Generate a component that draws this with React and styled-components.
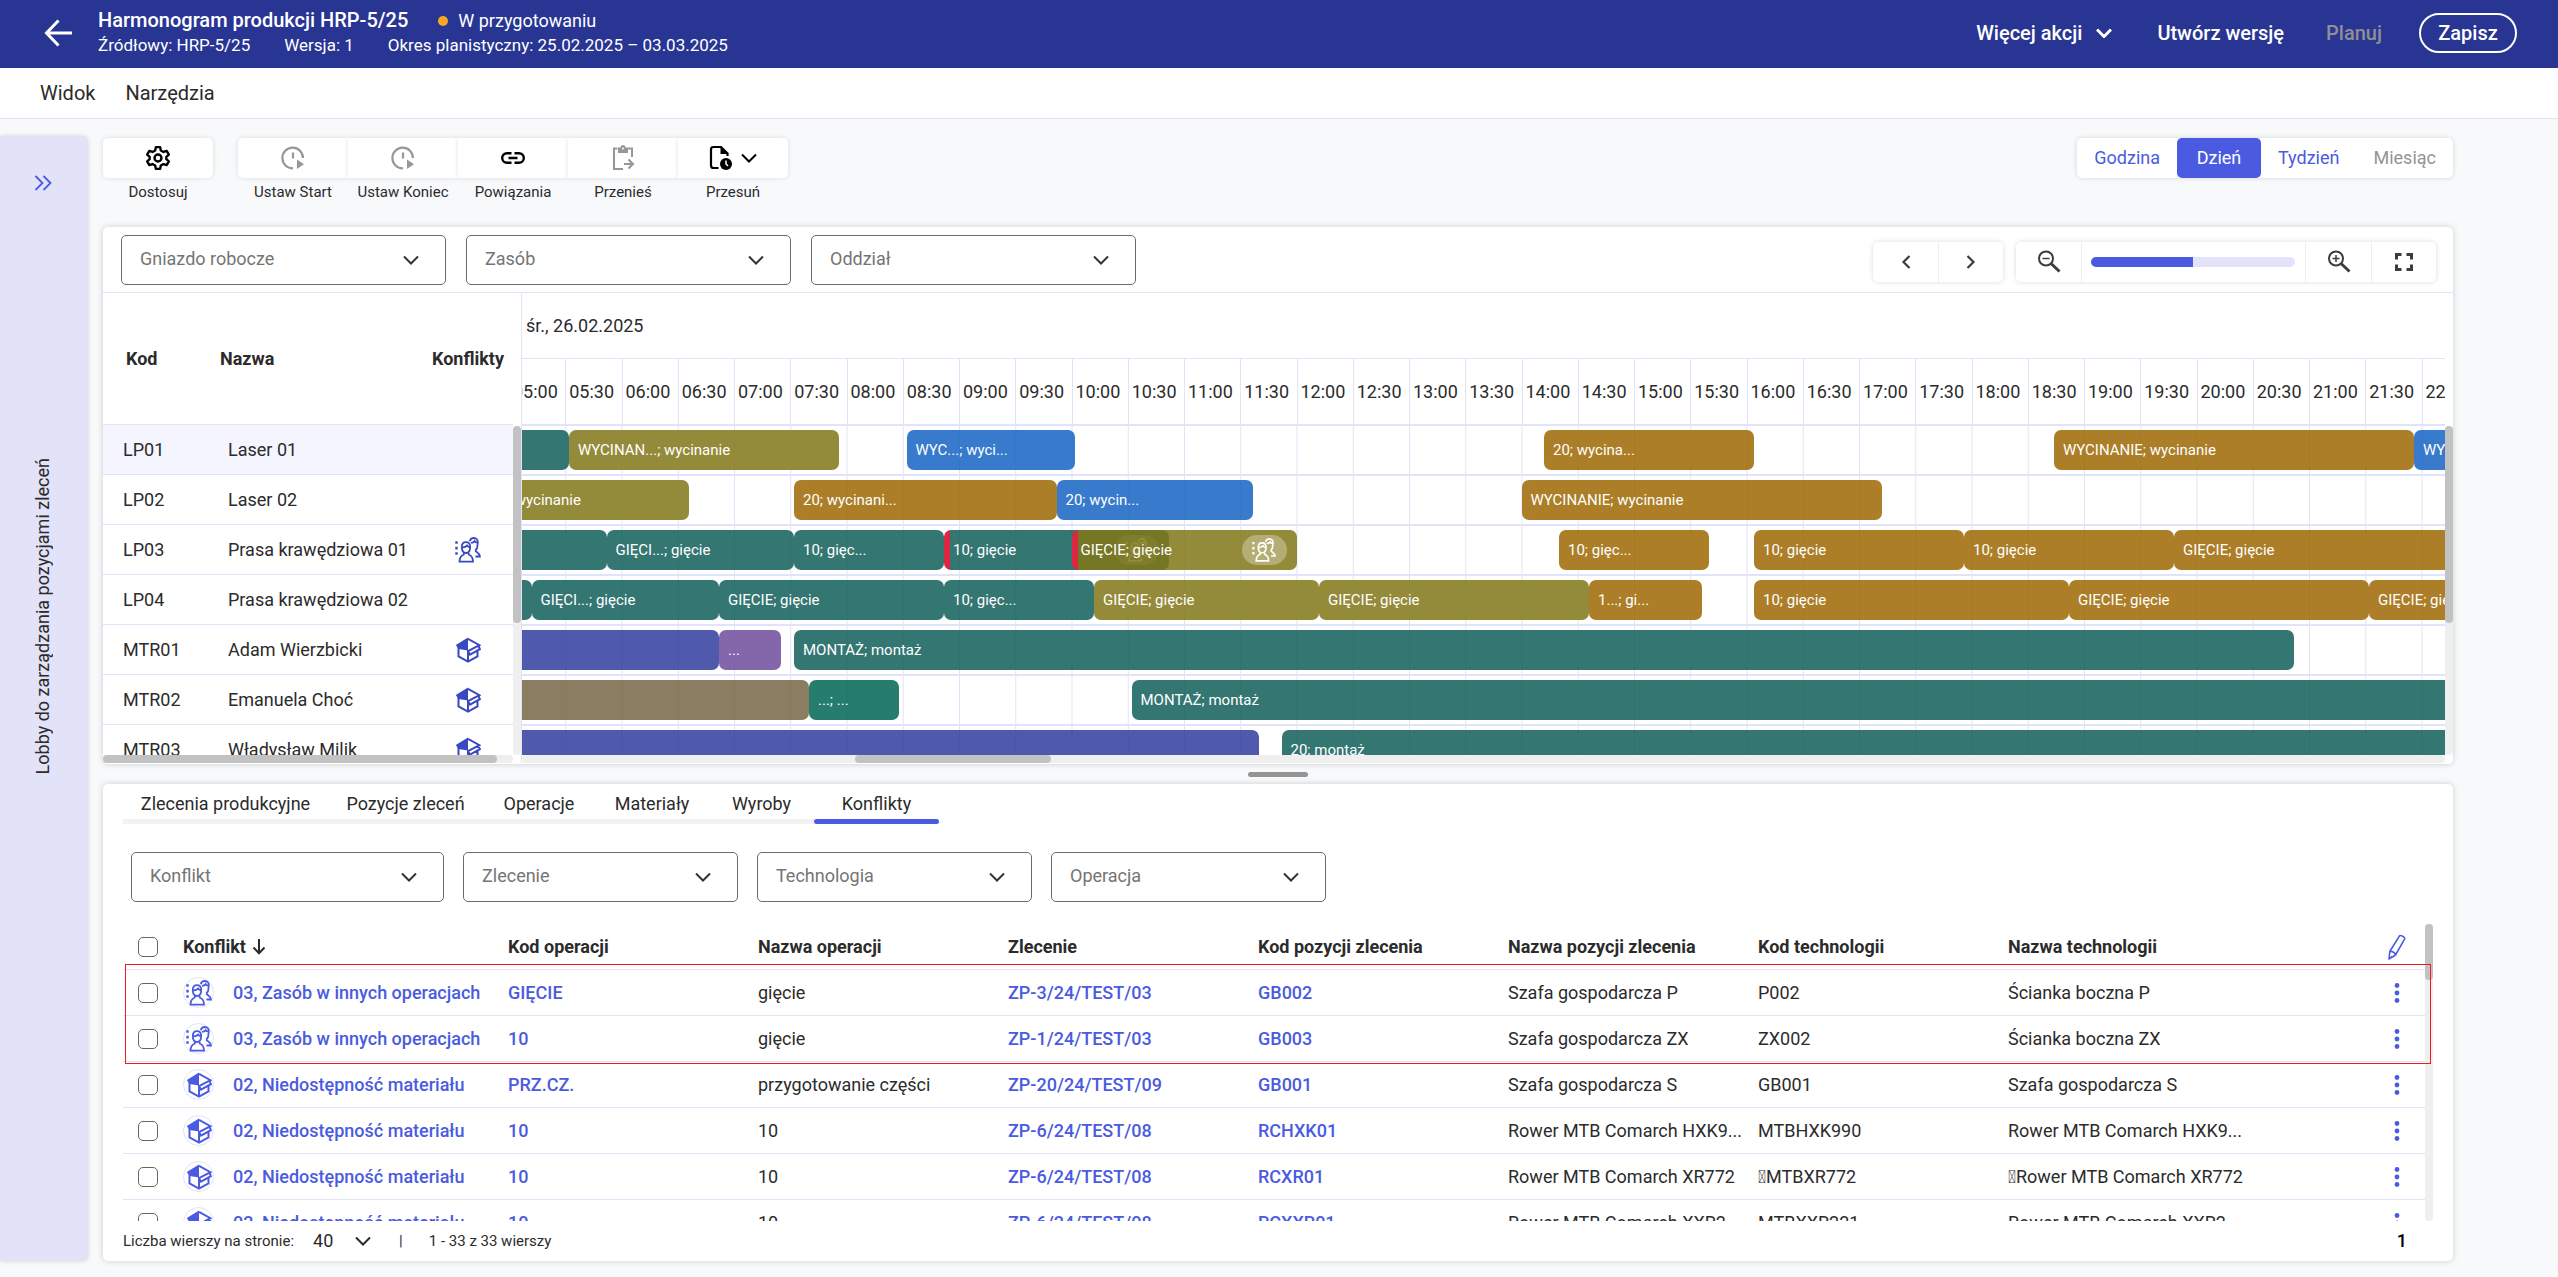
import styled, { createGlobalStyle } from "styled-components";

const colors = {
  navy: "#283593",
  accent: "#4a5be1",
  lilac: "#e2e3f8",
  page: "#f8f9fb",
  text: "#2b2b2b",
  muted: "#757575",
  disabled: "#949494",
};

const barColors = {
  teal: "rgba(16, 94, 89, 0.85)",
  olive: "rgba(129, 119, 23, 0.85)",
  gold: "rgba(156, 103, 1, 0.85)",
  blue: "rgba(21, 99, 194, 0.85)",
  indigo: "rgba(48, 61, 157, 0.85)",
  purple: "rgba(110, 76, 155, 0.85)",
  brown: "rgba(117, 102, 69, 0.85)",
  green: "rgba(0, 102, 84, 0.85)",
};

const GlobalStyle = createGlobalStyle`
  * {
    box-sizing: border-box;
  }
  body {
    margin: 0;
    background: ${colors.page};
    color: ${colors.text};
    font-family: Roboto, "Liberation Sans", sans-serif;
    font-size: 18px;
    line-height: 24px;
  }
  button, select, input {
    font: inherit;
    color: inherit;
    margin: 0;
  }
  button {
    border: 0;
    padding: 0;
    background: none;
    cursor: pointer;
  }
  a {
    color: ${colors.accent};
    font-weight: 500;
    text-decoration: none;
  }
`;

const Page = styled.div`
  display: flex;
  flex-direction: column;
  height: 100vh;
  min-height: 1100px;
`;

/* top bar */

const TopBar = styled.header`
  display: flex;
  align-items: center;
  height: 68px;
  padding: 0 41px 2px 44px;
  background: ${colors.navy};
  color: white;
`;

const BackButton = styled.button`
  display: flex;
  width: 54px;
`;

const Heading = styled.div`
  flex: 1;
`;

const HeadingLine = styled.div`
  display: flex;
  align-items: center;
  gap: 30px;
  line-height: 25px;
`;

const Title = styled.h1`
  margin: 0;
  font-size: 20px;
  font-weight: 500;
  line-height: 25px;
`;

const Details1 = styled(HeadingLine)`
  gap: 34px;
  font-size: 17px;
`;

const Status = styled.span`
  display: flex;
  align-items: center;
  gap: 10px;

  &::before {
    content: "";
    width: 10px;
    height: 10px;
    border-radius: 50%;
    background: #f9a825;
  }
`;

const TopActions = styled.div`
  display: flex;
  align-items: center;
  font-size: 20px;
  font-weight: 500;
`;

const TopAction = styled.button`
  display: flex;
  align-items: center;
  gap: 14px;
  margin-right: ${(p) => p.$space}px;

  &:disabled {
    color: #8f8f94;
  }
`;

const SaveButton = styled.button`
  height: 40px;
  width: 98px;
  border: 2px solid white;
  border-radius: 20px;
`;

const MenuBar = styled.nav`
  display: flex;
  gap: 30px;
  height: 51px;
  padding: 0 40px;
  background: white;
  border-bottom: 1px solid ${colors.lilac};
  font-size: 20px;
`;

/* page body */

const Body = styled.div`
  flex: 1;
  display: flex;
  min-height: 0;
`;

const Lobby = styled.aside`
  display: flex;
  flex-direction: column;
  align-items: center;
  width: 88px;
  margin: 17px 15px 16px 0;
  padding: 32px 2px 0 0;
  background: ${colors.lilac};
  border-radius: 0 5px 5px 0;
  box-shadow: 0 0 5px rgba(0, 0, 0, 0.15);
`;

const LobbyLabel = styled.span`
  margin-top: 260px;
  writing-mode: vertical-rl;
  transform: rotate(180deg);
`;

const Main = styled.main`
  flex: 1;
  display: flex;
  flex-direction: column;
  min-width: 0;
  padding: 19px 105px 16px 0;
`;

const Toolbar = styled.div`
  display: flex;
  align-items: flex-start;
  gap: 25px;
  height: 89px;
`;

const ToolGroup = styled.div`
  display: flex;
`;

const Tool = styled.button`
  width: 110px;
  font-size: 15px;
  line-height: 18px;
`;

const ToolFace = styled.span`
  display: flex;
  align-items: center;
  justify-content: center;
  gap: 8px;
  height: 40px;
  margin-bottom: 5px;
  background: white;
  box-shadow: 0 0 5px rgba(0, 0, 0, 0.12);
  color: ${(p) => (p.$dim ? "#979797" : "black")};

  ${Tool}:first-child & {
    border-radius: 5px 0 0 5px;
  }
  ${Tool}:last-child & {
    border-radius: 0 5px 5px 0;
  }
  ${Tool}:only-child & {
    border-radius: 5px;
  }
`;

const ScaleSwitch = styled.div`
  display: flex;
  height: 40px;
  margin-left: auto;
  border-radius: 5px;
  background: white;
  box-shadow: 0 0 5px rgba(0, 0, 0, 0.15);
`;

const ScaleButton = styled.button`
  min-width: 84px;
  padding: 0 17px;
  border-radius: 5px;
  color: ${(p) => (p.$active ? "white" : colors.accent)};
  background: ${(p) => (p.$active ? colors.accent : "none")};

  &:disabled {
    color: ${colors.disabled};
  }
`;

const Card = styled.section`
  background: white;
  border-radius: 5px;
  box-shadow: 0 0 6px rgba(0, 0, 0, 0.18);
`;

/* drop-downs */

const SelectBox = styled.div`
  display: grid;
  align-items: center;
  width: ${(p) => p.$width}px;

  select,
  svg {
    grid-area: 1 / 1;
  }
  svg {
    justify-self: end;
    margin-right: 27px;
    color: #333;
    pointer-events: none;
  }
`;

const Select = styled.select`
  width: 100%;
  height: 50px;
  padding: 0 18px 2px;
  border: 1px solid #6b6b6b;
  border-radius: 5px;
  background: white;
  color: ${colors.muted};
  appearance: none;
`;

/* gantt */

const GanttTop = styled.div`
  display: flex;
  align-items: center;
  gap: 20px;
  height: 66px;
  padding: 0 17px 0 18px;
  border-bottom: 1px solid ${colors.lilac};
`;

const Controls = styled.div`
  display: flex;
  gap: 13px;
  margin: 4px 0 0 auto;
`;

const ControlGroup = styled.div`
  display: flex;
  height: 40px;
  border-radius: 5px;
  color: #3d3d3d;
  box-shadow: 0 0 5px rgba(0, 0, 0, 0.15);
`;

const ControlButton = styled.button`
  display: flex;
  align-items: center;
  justify-content: center;
  width: 65px;

  & + & {
    border-left: 1px solid #efefef;
  }
`;

const ZoomSlot = styled.div`
  display: flex;
  align-items: center;
  width: 225px;
  padding: 0 10px 0 9px;
  border-left: 1px solid #efefef;
  border-right: 1px solid #efefef;
`;

const ZoomRange = styled.input`
  width: 100%;
  height: 10px;
  border-radius: 5px;
  background: linear-gradient(90deg, ${colors.accent} 50%, ${colors.lilac} 50%);
  appearance: none;

  &::-webkit-slider-thumb {
    appearance: none;
    width: 1px;
    height: 10px;
  }
`;

const Gantt = styled.div`
  display: grid;
  grid-template-columns: 410px 8px minmax(0, 1fr) 8px;
  grid-template-rows: 133px 329px 8px;
  padding-bottom: 1px;
`;

const ResourcePane = styled.div`
  grid-area: 1 / 1 / 3 / 2;
  overflow: hidden;
`;

const ResourceTable = styled.table`
  width: 100%;
  table-layout: fixed;
  border-collapse: separate;
  border-spacing: 0;

  th,
  td {
    padding: 0 0 0 20px;
    border-bottom: 1px solid ${colors.lilac};
    text-align: left;
    white-space: nowrap;
  }
  th {
    height: 132px;
    padding-left: 12px;
    font-weight: 700;
  }
  th:first-child {
    padding-left: 23px;
  }
  td {
    height: 50px;
  }
  th:last-child,
  td:last-child {
    padding: 0 2px 0 0;
    text-align: center;
  }
  td svg {
    display: block;
    margin: 0 auto;
    color: #3949bf;
  }
`;

const ResourceRow = styled.tr`
  background: ${(p) => (p.$active ? "#f5f5ff" : "white")};
`;

const TimePane = styled.div`
  grid-area: 1 / 3 / 4 / 4;
  display: grid;
  grid-template-rows: 462px 8px;
  border-left: 1px solid ${colors.lilac};
`;

const TimeScroll = styled.div`
  overflow: hidden;
`;

const Day = styled.div`
  height: 66px;
  padding: 21px 4px;
  border-bottom: 1px solid ${colors.lilac};
`;

/* twenty hours, shown from a little past 05:00 */
const Canvas = styled.div`
  width: 2250px;
  margin-left: -238px;
`;

const Hours = styled.div`
  display: grid;
  grid-template-columns: repeat(40, minmax(0, 1fr));
  height: 67px;
  border-bottom: 2px solid ${colors.lilac};
`;

const Hour = styled.div`
  padding: 21px 0 0 3px;
  border-left: 1px solid ${colors.lilac};
`;

const Lane = styled.div`
  display: grid;
  grid-template-columns: repeat(1200, minmax(0, 1fr));
  grid-template-rows: 40px;
  align-content: center;
  height: 50px;
  border-bottom: 2px solid ${colors.lilac};
  background: linear-gradient(90deg, ${colors.lilac} 1px, white 1px);
  background-size: calc(100% / 40) 100%;
`;

const Bar = styled.div`
  grid-row: 1;
  display: flex;
  align-items: center;
  justify-content: space-between;
  padding: 0 10px 0 9px;
  overflow: hidden;
  border-radius: 7px;
  color: white;
  font-size: 15px;
  white-space: nowrap;
  background: ${(p) =>
    p.$conflict
      ? `linear-gradient(90deg, #dc2540 6px, ${barColors[p.$color]} 6px)`
      : barColors[p.$color]};
`;

const BarBadge = styled.span`
  display: flex;
  align-items: center;
  justify-content: center;
  width: 45px;
  height: 30px;
  border-radius: 15px;
  background: rgba(255, 255, 255, 0.3);
`;

const Scroll = styled.div`
  grid-area: ${(p) => p.$area};
  display: flex;
  flex-direction: ${(p) => (p.$vertical ? "column" : "row")};
  border-radius: 4px;
  background: #efefef;

  &::before {
    content: "";
    flex: 0 0 ${(p) => p.$start || 0}%;
  }
  &::after {
    content: "";
    flex: 0 0 ${(p) => p.$size}%;
    border-radius: 4px;
    background: #c2c2c2;
  }
`;

const Splitter = styled.div`
  display: flex;
  justify-content: center;
  height: 20px;
  padding-top: 8px;

  &::before {
    content: "";
    width: 60px;
    height: 5px;
    border-radius: 3px;
    background: #949494;
  }
`;

/* details */

const Details = styled(Card)`
  flex: 1;
  display: flex;
  flex-direction: column;
  min-height: 0;
  padding: 0 20px;
`;

const Tabs = styled.div`
  display: grid;
  grid-template-columns: 205px 155px 112px 114px 105px 125px;
  height: 40px;
`;

const Tab = styled.button`
  display: flex;
  flex-direction: column;
  justify-content: space-between;
  padding-top: 8px;

  &::after {
    content: "";
    width: 100%;
    height: 5px;
    border-radius: ${(p) => (p.$active ? "3px" : "0")};
    background: ${(p) => (p.$active ? colors.accent : "#f2f2f2")};
  }
`;

const TabText = styled.span`
  align-self: center;
`;

const Filters = styled.div`
  display: flex;
  gap: 19px;
  padding: 28px 8px 22px;
`;

const TableArea = styled.div`
  position: relative;
  flex: 1;
  display: grid;
  grid-template-columns: minmax(0, 1fr) 8px;
  grid-template-rows: minmax(0, 1fr);
  min-height: 0;
`;

const TableClip = styled.div`
  overflow: hidden;
`;

const ConflictTable = styled.table`
  width: 100%;
  table-layout: fixed;
  border-collapse: separate;
  border-spacing: 0;

  th,
  td {
    height: 46px;
    padding: 0;
    border-bottom: 1px solid ${colors.lilac};
    text-align: left;
    white-space: nowrap;
  }
  th {
    font-weight: 700;
  }
  th:first-child,
  td:first-child {
    padding-left: 15px;
  }
`;

const WithIcon = styled.div`
  display: flex;
  align-items: center;
  gap: ${(p) => p.$gap}px;
`;

const IconCircle = styled.span`
  display: flex;
  align-items: center;
  justify-content: center;
  width: 31px;
  height: 31px;
  border: 1px solid ${colors.lilac};
  border-radius: 50%;
  color: ${colors.accent};
`;

const Checkbox = styled.input`
  display: block;
  width: 20px;
  height: 20px;
  border: 1px solid #666;
  border-radius: 5px;
  background: white;
  appearance: none;
`;

const IconButton = styled.button`
  display: flex;
  align-items: center;
  justify-content: center;
  width: 56px;
  height: 30px;
  color: ${colors.accent};
`;

/* frame round the two resource conflicts */
const Marker = styled.div`
  position: absolute;
  top: 40px;
  left: 2px;
  right: 2px;
  height: 100px;
  border: 1px solid #ed1c24;
  pointer-events: none;
`;

const Pager = styled.footer`
  display: flex;
  align-items: center;
  height: 40px;
  font-size: 15px;
`;

const PageSize = styled.div`
  display: grid;
  align-items: center;
  width: 58px;
  margin-left: 19px;

  select,
  svg {
    grid-area: 1 / 1;
  }
  select {
    border: 0;
    padding: 0;
    background: none;
    font-size: 18px;
    appearance: none;
  }
  svg {
    justify-self: end;
    pointer-events: none;
  }
`;

const Separator = styled.span`
  margin: 0 26px 0 28px;
`;

const PageNumber = styled.button`
  margin-left: auto;
  padding-right: 26px;
  color: black;
  font-size: 18px;
  font-weight: 500;
`;

/* icons */

const Svg = ({ w, h = w, sw = 2, box, children }) => (
  <svg width={w} height={h} viewBox={box || `0 0 ${w} ${h}`} fill="none" stroke="currentColor" strokeWidth={sw} aria-hidden="true">
    {children}
  </svg>
);

const Chevron = ({ sw = 2 }) => (
  <Svg w={16} h={10} sw={sw}>
    <path d="M1 1.5 8 8.5 15 1.5" />
  </Svg>
);

const PeopleIcon = ({ size = 26 }) => (
  <Svg w={size} box="0 0 26 26" sw={1.8}>
    <path d="M1.5 4.2v2.6M1.5 9.8v2.6M1.5 15.2v2.6" strokeWidth="2.4" />
    <path d="M6.8 10c0-3 1.6-4.8 4.2-4.8s4.2 1.8 4.2 4.8c0 3.6-1.6 6-4.2 6s-4.2-2.4-4.2-6zM7 10.3c2.3.2 4-.5 5-1.8.8 1.2 1.8 1.7 3.2 1.8" />
    <path d="M8.8 16v1.5c-2.5 1-4.3 3.5-4.3 7.2h13.5c0-3.7-1.8-6.2-4.3-7.2V16" />
    <path d="M14.8 4.2C15.3 1.9 17 1 18.8 1c2.6 0 4.2 1.8 4 4.5-.1 1.5-.5 2.5-.4 3.8 0 1.2-.1 2.2-1.6 3.500v1.500c1 1 3.900 2.100 4.100 5.200h-4.400M16 5.800c1.800 0 3-.6 3.600-1.600.5 1 1.500 1.500 2.900 1.500" />
  </Svg>
);

const BoxIcon = () => (
  <Svg w={26}>
    <path d="M13 .5.8 8l2.7 4L13 13.5z" fill="currentColor" stroke="none" />
    <path d="M13 1.8 24.5 8.2 13 14.200M3.500 10v9.500L13 24.600l9.500-5.100v-6.500M13 13v11.500M13 14.200l2 3.400 9.800-5.400-1.500-4" />
  </Svg>
);

const BackIcon = () => (
  <Svg w={29} h={28} sw={3}>
    <path d="M14.5 1.5 2.5 14l12 12.5M2.500 14H28" />
  </Svg>
);

const GearIcon = () => (
  <Svg w={26} box="0 0 24 24" sw={2.2}>
    <path strokeLinejoin="round" d="M10 2h4l.6 3 2.5 1.4 2.9-1 2 3.5-2.300 2v2.200l2.300 2-2 3.500-2.900-1-2.500 1.400-.6 3h-4l-.6-3-2.500-1.400-2.900 1-2-3.500 2.300-2v-2.200l-2.300-2 2-3.500 2.900 1L9.400 5z" />
    <circle cx="12" cy="12" r="3.2" />
  </Svg>
);

const ClockPlayIcon = () => (
  <Svg w={24} sw={2.2}>
    <path d="M22 12A10.3 10.3 0 1 0 12 22.3M12 6.5v6" />
    <path d="M16 13.5v9.5l7-4.7z" fill="currentColor" stroke="none" />
  </Svg>
);

const LinkIcon = () => (
  <Svg w={24} h={12} sw={2.4}>
    <path d="M10.5 1.2H6a4.8 4.8 0 0 0 0 9.6h4.5M13.5 1.2H18a4.8 4.8 0 0 1 0 9.6h-4.5M7.5 6h9" />
  </Svg>
);

const ClipboardIcon = () => (
  <Svg w={23} h={26} sw={2}>
    <path d="M5.5 3.5H2V24h9M16 3.5h4V12M12 19h8.5M16.5 14.5l4.5 4.5-4.5 4.5" />
    <path d="M6 2.5h2.5a2.500 2.500 0 0 1 5 0H16V8H6z" fill="currentColor" stroke="none" />
    <circle cx="11" cy="3.5" r="1" fill="white" stroke="none" />
  </Svg>
);

const DocClockIcon = () => (
  <Svg w={24} h={26} sw={2.2}>
    <path d="M9.5 23H4.5Q2 23 2 20.5V4.5Q2 2 4.5 2H12l6.5 6.5V11" />
    <path d="M11.5 1v8h8z" fill="currentColor" stroke="none" />
    <circle cx="17" cy="19" r="6" fill="currentColor" stroke="none" />
    <path d="M17 15.5V19l2 2" stroke="white" strokeWidth="1.5" />
  </Svg>
);

const MagnifierIcon = ({ plus }) => (
  <Svg w={24} h={23} sw={2}>
    <circle cx="9" cy="8.5" r="7" />
    <path d="M14 13.5l8.5 8" strokeWidth="3" />
    <path d={plus ? "M5.5 8.5h7M9 5v7" : "M5.5 8.5h7"} strokeWidth="1.5" />
  </Svg>
);

const FullscreenIcon = () => (
  <Svg w={18} sw={3}>
    <path d="M1.5 6.5v-5h5M11.5 1.5h5v5M16.5 11.5v5h-5M6.5 16.5h-5v-5" />
  </Svg>
);

const ArrowIcon = ({ d }) => (
  <Svg w={10} h={14} sw={2.2}>
    <path d={d} />
  </Svg>
);

const SortIcon = () => (
  <Svg w={14} h={16} sw={2}>
    <path d="M7 0v14M1.5 8.5 7 14.3l5.5-5.8" />
  </Svg>
);

const PencilIcon = () => (
  <Svg w={20} h={26} sw={1.6}>
    <path strokeLinejoin="round" d="M12.5 1.8c1-1.2 5.8 1.5 5.2 3L8.5 21 2 25l.8-7.5zM2.8 17.5c2.5-.5 5.5 1.2 5.7 3.5M4.5 22v2" />
  </Svg>
);

const DotsIcon = () => (
  <Svg w={6} h={20}>
    <g fill="currentColor" stroke="none">
      <circle cx="3" cy="2.5" r="2.4" />
      <circle cx="3" cy="10" r="2.4" />
      <circle cx="3" cy="17.5" r="2.4" />
    </g>
  </Svg>
);

const DoubleChevronIcon = () => (
  <Svg w={18} h={16} sw={1.8}>
    <path d="M1.5 1l7 7-7 7M9.5 1l7 7-7 7" />
  </Svg>
);

/* data */

const tools = [
  { label: "Ustaw Start", icon: <ClockPlayIcon />, dim: true },
  { label: "Ustaw Koniec", icon: <ClockPlayIcon />, dim: true },
  { label: "Powiązania", icon: <LinkIcon /> },
  { label: "Przenieś", icon: <ClipboardIcon />, dim: true },
  { label: "Przesuń", icon: <><DocClockIcon /><Chevron /></> },
];

// bar: [start, end, color, label, conflict]
const resources = [
  {
    code: "LP01",
    name: "Laser 01",
    bars: [
      ["03:00", "05:32", "teal"],
      ["05:32", "07:56", "olive", "WYCINAN...; wycinanie"],
      ["08:32", "10:02", "blue", "WYC...; wyci..."],
      ["14:12", "16:04", "gold", "20; wycina..."],
      ["18:44", "21:56", "gold", "WYCINANIE; wycinanie"],
      ["21:56", "23:00", "blue", "WYCINANIE"],
    ],
  },
  {
    code: "LP02",
    name: "Laser 02",
    bars: [
      ["04:12", "06:36", "olive", "WYCINANIE; wycinanie"],
      ["07:32", "09:52", "gold", "20; wycinani..."],
      ["09:52", "11:37", "blue", "20; wycin..."],
      ["14:00", "17:12", "gold", "WYCINANIE; wycinanie"],
    ],
  },
  {
    code: "LP03",
    name: "Prasa krawędziowa 01",
    conflict: "people",
    bars: [
      ["03:00", "05:52", "teal"],
      ["05:52", "07:32", "teal", "GIĘCI...; gięcie"],
      ["07:32", "08:52", "teal", "10; gięc..."],
      ["08:52", "10:52", "teal", "10; gięcie", true],
      ["10:00", "12:00", "olive", "GIĘCIE; gięcie", true],
      ["14:20", "15:40", "gold", "10; gięc..."],
      ["16:04", "17:56", "gold", "10; gięcie"],
      ["17:56", "19:48", "gold", "10; gięcie"],
      ["19:48", "23:00", "gold", "GIĘCIE; gięcie"],
    ],
  },
  {
    code: "LP04",
    name: "Prasa krawędziowa 02",
    bars: [
      ["03:00", "05:12", "teal"],
      ["05:12", "06:52", "teal", "GIĘCI...; gięcie"],
      ["06:52", "08:52", "teal", "GIĘCIE; gięcie"],
      ["08:52", "10:12", "teal", "10; gięc..."],
      ["10:12", "12:12", "olive", "GIĘCIE; gięcie"],
      ["12:12", "14:36", "olive", "GIĘCIE; gięcie"],
      ["14:36", "15:36", "gold", "1...; gi..."],
      ["16:04", "18:52", "gold", "10; gięcie"],
      ["18:52", "21:32", "gold", "GIĘCIE; gięcie"],
      ["21:32", "23:00", "gold", "GIĘCIE; gięcie"],
    ],
  },
  {
    code: "MTR01",
    name: "Adam Wierzbicki",
    conflict: "box",
    bars: [
      ["03:00", "06:52", "indigo"],
      ["06:52", "07:25", "purple", "..."],
      ["07:32", "20:52", "teal", "MONTAŻ; montaż"],
    ],
  },
  {
    code: "MTR02",
    name: "Emanuela Choć",
    conflict: "box",
    bars: [
      ["03:00", "07:40", "brown"],
      ["07:40", "08:28", "green", "...; ..."],
      ["10:32", "23:00", "teal", "MONTAŻ; montaż"],
    ],
  },
  {
    code: "MTR03",
    name: "Władysław Milik",
    conflict: "box",
    bars: [
      ["03:00", "11:40", "indigo"],
      ["11:52", "23:00", "teal", "20; montaż"],
    ],
  },
];

const headers = [
  "Kod operacji",
  "Nazwa operacji",
  "Zlecenie",
  "Kod pozycji zlecenia",
  "Nazwa pozycji zlecenia",
  "Kod technologii",
  "Nazwa technologii",
];

const RESOURCE = "03, Zasób w innych operacjach";
const MATERIAL = "02, Niedostępność materiału";

const conflicts = [
  [RESOURCE, "GIĘCIE", "gięcie", "ZP-3/24/TEST/03", "GB002", "Szafa gospodarcza P", "P002", "Ścianka boczna P"],
  [RESOURCE, "10", "gięcie", "ZP-1/24/TEST/03", "GB003", "Szafa gospodarcza ZX", "ZX002", "Ścianka boczna ZX"],
  [MATERIAL, "PRZ.CZ.", "przygotowanie części", "ZP-20/24/TEST/09", "GB001", "Szafa gospodarcza S", "GB001", "Szafa gospodarcza S"],
  [MATERIAL, "10", "10", "ZP-6/24/TEST/08", "RCHXK01", "Rower MTB Comarch HXK9...", "MTBHXK990", "Rower MTB Comarch HXK9..."],
  [MATERIAL, "10", "10", "ZP-6/24/TEST/08", "RCXR01", "Rower MTB Comarch XR772", "\uE000MTBXR772", "\uE000Rower MTB Comarch XR772"],
  [MATERIAL, "10", "10", "ZP-6/24/TEST/08", "RCXXR01", "Rower MTB Comarch XXR2", "MTBXXR221", "Rower MTB Comarch XXR2"],
];

const linkColumns = [1, 3, 4];

const FIRST_HOUR = 3;
const hours = Array.from({ length: 40 }, (_, i) => {
  const h = String(FIRST_HOUR + Math.floor(i / 2)).padStart(2, "0");
  return `${h}:${i % 2 ? "30" : "00"}`;
});

const toColumn = (time) => {
  const [h, m] = time.split(":").map(Number);
  return (h - FIRST_HOUR) * 60 + m + 1;
};

function Dropdown({ label, width }) {
  return (
    <SelectBox $width={width}>
      <Select aria-label={label}>
        <option>{label}</option>
      </Select>
      <Chevron />
    </SelectBox>
  );
}

function Header() {
  return (
    <TopBar>
      <BackButton aria-label="Wstecz">
        <BackIcon />
      </BackButton>
      <Heading>
        <HeadingLine>
          <Title>Harmonogram produkcji HRP-5/25</Title>
          <Status>W przygotowaniu</Status>
        </HeadingLine>
        <Details1>
          <span>Źródłowy: HRP-5/25</span>
          <span>Wersja: 1</span>
          <span>Okres planistyczny: 25.02.2025 – 03.03.2025</span>
        </Details1>
      </Heading>
      <TopActions>
        <TopAction $space={45}>
          Więcej akcji
          <Chevron sw={3} />
        </TopAction>
        <TopAction $space={42}>Utwórz wersję</TopAction>
        <TopAction $space={37} disabled>
          Planuj
        </TopAction>
        <SaveButton>Zapisz</SaveButton>
      </TopActions>
    </TopBar>
  );
}

function GanttChart() {
  return (
    <Gantt>
      <ResourcePane>
        <ResourceTable>
          <colgroup>
            <col width="105" />
            <col />
            <col width="88" />
          </colgroup>
          <thead>
            <tr>
              <th>Kod</th>
              <th>Nazwa</th>
              <th>Konflikty</th>
            </tr>
          </thead>
          <tbody>
            {resources.map((r, i) => (
              <ResourceRow key={r.code} $active={i === 0}>
                <td>{r.code}</td>
                <td>{r.name}</td>
                <td>
                  {r.conflict === "people" && <PeopleIcon />}
                  {r.conflict === "box" && <BoxIcon />}
                </td>
              </ResourceRow>
            ))}
          </tbody>
        </ResourceTable>
      </ResourcePane>
      <Scroll $area="2 / 2" $vertical $size={60} />
      <TimePane>
        <TimeScroll>
          <Day>śr., 26.02.2025</Day>
          <Canvas>
            <Hours>
              {hours.map((h) => (
                <Hour key={h}>{h}</Hour>
              ))}
            </Hours>
            {resources.map((r) => (
              <Lane key={r.code}>
                {r.bars.map(([start, end, color, label, conflict]) => (
                  <Bar
                    key={start}
                    $color={color}
                    $conflict={conflict}
                    style={{ gridColumn: `${toColumn(start)} / ${toColumn(end)}` }}
                  >
                    {label}
                    {conflict && (
                      <BarBadge>
                        <PeopleIcon size={24} />
                      </BarBadge>
                    )}
                  </Bar>
                ))}
              </Lane>
            ))}
          </Canvas>
        </TimeScroll>
        <Scroll $area="2 / 1" $start={17.3} $size={10.2} />
      </TimePane>
      <Scroll $area="2 / 4" $vertical $size={60} />
      <Scroll $area="3 / 1" $size={96} />
    </Gantt>
  );
}

function Conflicts() {
  return (
    <TableArea>
      <TableClip>
        <ConflictTable>
          <colgroup>
            <col width="60" />
            <col width="325" />
            {headers.slice(0, 6).map((h) => (
              <col key={h} width="250" />
            ))}
            <col />
            <col width="56" />
          </colgroup>
          <thead>
            <tr>
              <th>
                <Checkbox type="checkbox" aria-label="Zaznacz wszystkie" />
              </th>
              <th>
                <WithIcon $gap={6}>
                  Konflikt <SortIcon />
                </WithIcon>
              </th>
              {headers.map((h) => (
                <th key={h}>{h}</th>
              ))}
              <th>
                <IconButton aria-label="Edytuj kolumny">
                  <PencilIcon />
                </IconButton>
              </th>
            </tr>
          </thead>
          <tbody>
            {conflicts.map((row, i) => (
              <tr key={i}>
                <td>
                  <Checkbox type="checkbox" aria-label={`Zaznacz wiersz ${i + 1}`} />
                </td>
                <td>
                  <WithIcon $gap={19}>
                    <IconCircle>{row[0] === RESOURCE ? <PeopleIcon /> : <BoxIcon />}</IconCircle>
                    <a href="#konflikt">{row[0]}</a>
                  </WithIcon>
                </td>
                {row.slice(1).map((value, c) => (
                  <td key={c}>{linkColumns.includes(c + 1) ? <a href="#szczegoly">{value}</a> : value}</td>
                ))}
                <td>
                  <IconButton aria-label="Opcje wiersza">
                    <DotsIcon />
                  </IconButton>
                </td>
              </tr>
            ))}
          </tbody>
        </ConflictTable>
      </TableClip>
      <Scroll $area="1 / 2" $vertical $size={19} />
      <Marker />
    </TableArea>
  );
}

export default function App() {
  return (
    <Page>
      <GlobalStyle />
      <Header />
      <MenuBar>
        <button>Widok</button>
        <button>Narzędzia</button>
      </MenuBar>
      <Body>
        <Lobby>
          <IconButton aria-label="Rozwiń">
            <DoubleChevronIcon />
          </IconButton>
          <LobbyLabel>Lobby do zarządzania pozycjami zleceń</LobbyLabel>
        </Lobby>
        <Main>
          <Toolbar>
            <ToolGroup>
              <Tool>
                <ToolFace>
                  <GearIcon />
                </ToolFace>
                Dostosuj
              </Tool>
            </ToolGroup>
            <ToolGroup>
              {tools.map((t) => (
                <Tool key={t.label}>
                  <ToolFace $dim={t.dim}>{t.icon}</ToolFace>
                  {t.label}
                </Tool>
              ))}
            </ToolGroup>
            <ScaleSwitch>
              <ScaleButton>Godzina</ScaleButton>
              <ScaleButton $active>Dzień</ScaleButton>
              <ScaleButton>Tydzień</ScaleButton>
              <ScaleButton disabled>Miesiąc</ScaleButton>
            </ScaleSwitch>
          </Toolbar>
          <Card>
            <GanttTop>
              <Dropdown label="Gniazdo robocze" width={325} />
              <Dropdown label="Zasób" width={325} />
              <Dropdown label="Oddział" width={325} />
              <Controls>
                <ControlGroup>
                  <ControlButton aria-label="Wcześniej">
                    <ArrowIcon d="M8.5 1 2.5 7l6 6" />
                  </ControlButton>
                  <ControlButton aria-label="Później">
                    <ArrowIcon d="M1.5 1l6 6-6 6" />
                  </ControlButton>
                </ControlGroup>
                <ControlGroup>
                  <ControlButton aria-label="Pomniejsz">
                    <MagnifierIcon />
                  </ControlButton>
                  <ZoomSlot>
                    <ZoomRange type="range" defaultValue="50" aria-label="Skala" />
                  </ZoomSlot>
                  <ControlButton aria-label="Powiększ">
                    <MagnifierIcon plus />
                  </ControlButton>
                  <ControlButton aria-label="Pełny ekran">
                    <FullscreenIcon />
                  </ControlButton>
                </ControlGroup>
              </Controls>
            </GanttTop>
            <GanttChart />
          </Card>
          <Splitter />
          <Details>
            <Tabs>
              {["Zlecenia produkcyjne", "Pozycje zleceń", "Operacje", "Materiały", "Wyroby", "Konflikty"].map((t) => (
                <Tab key={t} $active={t === "Konflikty"}>
                  <TabText>{t}</TabText>
                </Tab>
              ))}
            </Tabs>
            <Filters>
              <Dropdown label="Konflikt" width={313} />
              <Dropdown label="Zlecenie" width={275} />
              <Dropdown label="Technologia" width={275} />
              <Dropdown label="Operacja" width={275} />
            </Filters>
            <Conflicts />
            <Pager>
              <label htmlFor="page-size">Liczba wierszy na stronie:</label>
              <PageSize>
                <select id="page-size">
                  <option>40</option>
                </select>
                <Chevron />
              </PageSize>
              <Separator>|</Separator>
              1 - 33 z 33 wierszy
              <PageNumber>1</PageNumber>
            </Pager>
          </Details>
        </Main>
      </Body>
    </Page>
  );
}
